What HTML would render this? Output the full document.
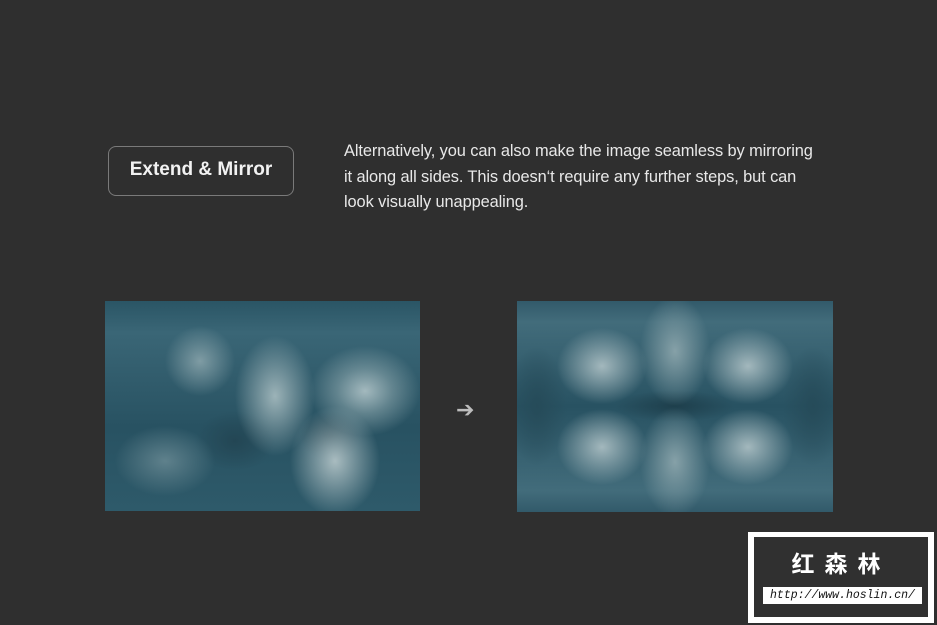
<!DOCTYPE html>
<html><head><meta charset="utf-8"><style>
body{margin:0;width:937px;height:625px;background:#2f2f2f;position:relative;overflow:hidden;font-family:"Liberation Sans",sans-serif}
.btn{position:absolute;left:108px;top:146px;width:186px;height:50px;border:1.5px solid #7a7a7a;border-radius:8px;box-sizing:border-box;color:#f2f2f2;font-weight:bold;font-size:19px;text-align:center;line-height:46px}
.txt{position:absolute;left:344px;top:139px;color:#e8e8e8;font-size:16.4px;line-height:25.5px;width:520px;letter-spacing:-0.1px}
.tex{position:absolute}
#a{left:105px;top:301px;width:315px;height:210px;background:
radial-gradient(ellipse 55px 45px at 260px 90px,#a3b9be,rgba(150,175,180,.5) 50%,transparent),
radial-gradient(ellipse 45px 55px at 230px 160px,#a9bcc0,transparent),
radial-gradient(ellipse 40px 60px at 170px 95px,#9cb3b8,transparent),
radial-gradient(ellipse 35px 35px at 95px 60px,#7f9ca4,transparent),
radial-gradient(ellipse 50px 35px at 60px 160px,#5f818c,transparent),
radial-gradient(ellipse 30px 25px at 225px 135px,#1e3f4c,transparent),
radial-gradient(ellipse 40px 30px at 130px 140px,#234654,transparent),
linear-gradient(#2a5565,#3a6676 15%,#285262 60%,#2e5a6a)}
#b{left:517px;top:301px;width:316px;height:211px;background:
radial-gradient(ellipse 45px 38px at 85px 65px,#a3b8bd,transparent),
radial-gradient(ellipse 45px 38px at 231px 65px,#a3b8bd,transparent),
radial-gradient(ellipse 45px 38px at 85px 146px,#a3b8bd,transparent),
radial-gradient(ellipse 45px 38px at 231px 146px,#a3b8bd,transparent),
radial-gradient(ellipse 35px 55px at 158px 50px,#86a1a8,transparent),
radial-gradient(ellipse 35px 55px at 158px 161px,#86a1a8,transparent),
radial-gradient(ellipse 60px 16px at 158px 105px,#1e3f4c,transparent),
radial-gradient(ellipse 30px 60px at 20px 105px,#264b59,transparent),
radial-gradient(ellipse 30px 60px at 296px 105px,#264b59,transparent),
linear-gradient(#325a6a,#426c7b 10%,#285262 50%,#426c7b 90%,#325a6a)}
.arrow{position:absolute;left:456px;top:397px;color:#bdbdbd;font-size:22px}
.wm{position:absolute;left:748px;top:532px;width:186px;height:91px;background:#fff}
.wm .in{position:absolute;left:6px;top:5px;right:6px;bottom:6px;background:#303030}
.wm .t{position:absolute;left:0;right:0;top:15px;text-align:center;color:#fff;font-family:"Noto Sans CJK SC",sans-serif;font-weight:bold;font-size:23px;letter-spacing:10px;line-height:30px}
.wm .u{position:absolute;left:15px;top:55px;width:159px;height:17px;background:#fff;color:#111;font-family:"Liberation Mono",monospace;font-style:italic;font-size:11.5px;line-height:17px;text-align:center}
</style></head><body>
<div class="btn">Extend &amp; Mirror</div>
<div class="txt">Alternatively, you can also make the image seamless by mirroring<br>it along all sides. This doesn‘t require any further steps, but can<br>look visually unappealing.</div>
<div class="tex" id="a"></div>
<div class="arrow">➔</div>
<div class="tex" id="b"></div>
<div class="wm"><div class="in"></div><div class="t">红森林</div><div class="u">http://www.hoslin.cn/</div></div>
</body></html>
